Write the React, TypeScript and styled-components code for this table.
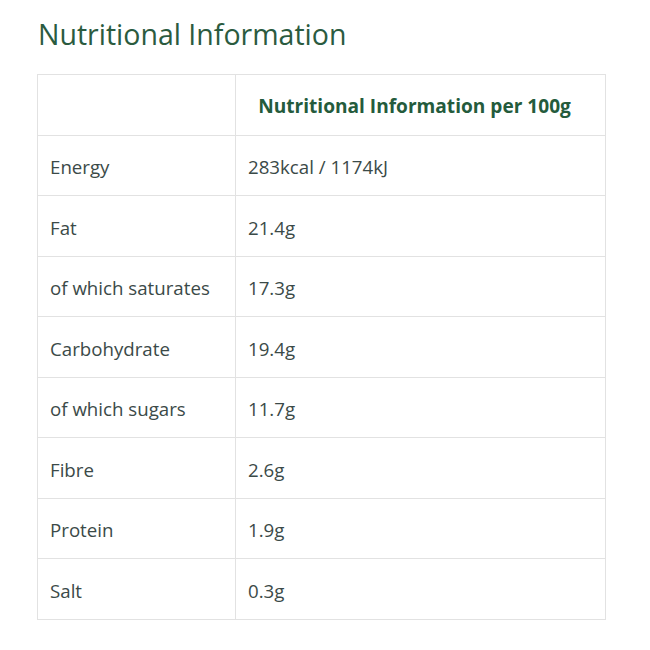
import React from "react";
import styled, { createGlobalStyle } from "styled-components";

const Global = createGlobalStyle`
  html, body { margin: 0; padding: 0; background: #fff; }
  body { font-family: "Open Sans", "Noto Sans", sans-serif; }
`;

const Page = styled.div`
  padding: 14px 45px 0 37px;
  width: 568px;
`;

const Title = styled.h2`
  margin: 0 0 20px 1px;
  font-size: 28.5px;
  font-weight: 400;
  line-height: 40px;
  color: #2b5b3f;
`;

const Table = styled.table`
  width: 569px;
  border-collapse: collapse;
  border: 1px solid #e2e2e2;
  table-layout: fixed;
`;

const Row = styled.tr`
  height: 60.5px;
`;

const Cell = styled.td<{ $w?: number }>`
  border: 1px solid #e2e2e2;
  padding: 3px 12px 0;
  font-size: 18.7px;
  color: #3b4a48;
  vertical-align: middle;
  width: ${(p) => (p.$w ? `${p.$w}px` : "auto")};
`;

const HeadCell = styled.th`
  border: 1px solid #e2e2e2;
  padding: 2px 18px 0 6px;
  font-size: 19.1px;
  font-weight: 700;
  color: #245b3c;
  text-align: center;
  white-space: nowrap;
`;

const rows: [string, string][] = [
  ["Energy", "283kcal / 1174kJ"],
  ["Fat", "21.4g"],
  ["of which saturates", "17.3g"],
  ["Carbohydrate", "19.4g"],
  ["of which sugars", "11.7g"],
  ["Fibre", "2.6g"],
  ["Protein", "1.9g"],
  ["Salt", "0.3g"],
];

export default function App() {
  return (
    <>
      <Global />
      <Page>
        <Title>Nutritional Information</Title>
        <Table>
          <thead>
            <Row>
              <Cell as="th" $w={173} />
              <HeadCell>Nutritional Information per 100g</HeadCell>
            </Row>
          </thead>
          <tbody>
            {rows.map(([k, v]) => (
              <Row key={k}>
                <Cell>{k}</Cell>
                <Cell>{v}</Cell>
              </Row>
            ))}
          </tbody>
        </Table>
      </Page>
    </>
  );
}
